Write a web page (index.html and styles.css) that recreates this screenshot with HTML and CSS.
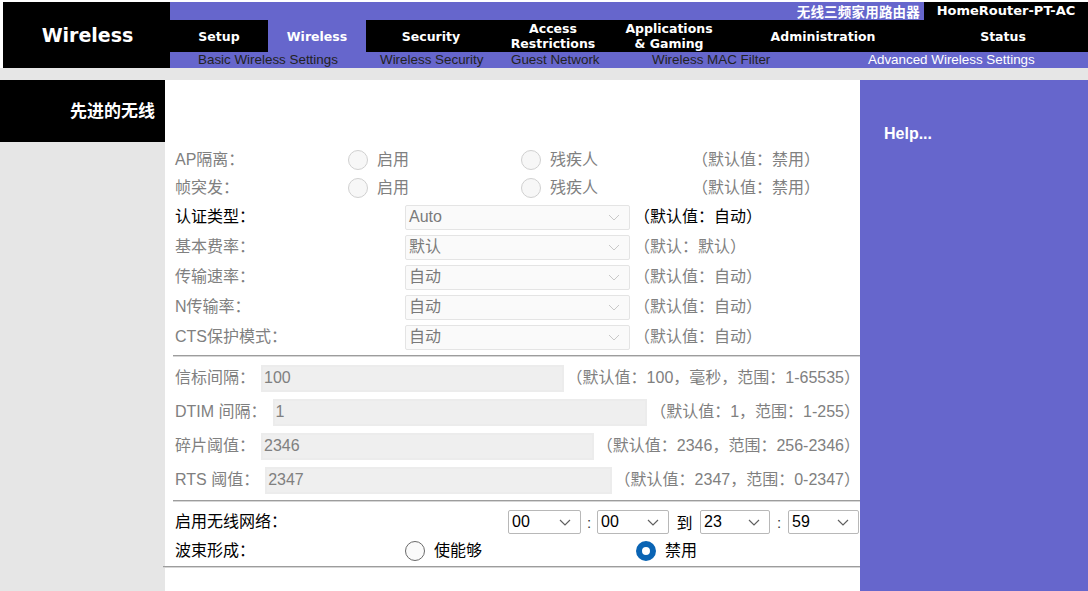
FILE: index.html
```html
<!DOCTYPE html>
<html lang="zh">
<head>
<meta charset="utf-8">
<title>Advanced Wireless Settings</title>
<link rel="stylesheet" href="styles.css">
</head>
<body>
<header class="header">
  <div class="logo">Wireless</div>
  <div class="hright">
    <div class="toprow">
      <span class="product">无线三频家用路由器</span>
      <span class="model">HomeRouter-PT-AC</span>
    </div>
    <nav class="tabs">
      <span class="tab w-setup">Setup</span>
      <span class="tab w-wireless active">Wireless</span>
      <span class="tab w-security">Security</span>
      <span class="tab w-access">Access<br>Restrictions</span>
      <span class="tab w-apps">Applications<br>&amp; Gaming</span>
      <span class="tab w-admin">Administration</span>
      <span class="tab w-status">Status</span>
    </nav>
    <div class="subnav">
      <span class="sub s1">Basic Wireless Settings</span>
      <span class="sub s2">Wireless Security</span>
      <span class="sub s3">Guest Network</span>
      <span class="sub s4">Wireless MAC Filter</span>
      <span class="sub s5 current">Advanced Wireless Settings</span>
    </div>
  </div>
</header>

<main class="main">
  <aside class="side">
    <div class="side-title">先进的无线</div>
  </aside>

  <section class="content">
    <div class="block radios">
      <div class="row r28">
        <span class="lbl lw-radio">AP隔离：</span>
        <span class="opt o1"><span class="radio dis"></span>启用</span>
        <span class="opt o2"><span class="radio dis"></span>残疾人</span>
        <span class="note">（默认值：禁用）</span>
      </div>
      <div class="row r28">
        <span class="lbl lw-radio">帧突发：</span>
        <span class="opt o1"><span class="radio dis"></span>启用</span>
        <span class="opt o2"><span class="radio dis"></span>残疾人</span>
        <span class="note">（默认值：禁用）</span>
      </div>
    </div>

    <div class="block selects">
      <div class="row r30">
        <span class="lbl lw-sel dark">认证类型：</span>
        <span class="sel dis"><span class="val">Auto</span><svg class="chev" width="12" height="7" viewBox="0 0 12 7"><path d="M1 1l5 5 5-5" fill="none" stroke="#c8c8c8" stroke-width="1"/></svg></span>
        <span class="note dark">（默认值：自动）</span>
      </div>
      <div class="row r30">
        <span class="lbl lw-sel">基本费率：</span>
        <span class="sel dis"><span class="val">默认</span><svg class="chev" width="12" height="7" viewBox="0 0 12 7"><path d="M1 1l5 5 5-5" fill="none" stroke="#c8c8c8" stroke-width="1"/></svg></span>
        <span class="note">（默认：默认）</span>
      </div>
      <div class="row r30">
        <span class="lbl lw-sel">传输速率：</span>
        <span class="sel dis"><span class="val">自动</span><svg class="chev" width="12" height="7" viewBox="0 0 12 7"><path d="M1 1l5 5 5-5" fill="none" stroke="#c8c8c8" stroke-width="1"/></svg></span>
        <span class="note">（默认值：自动）</span>
      </div>
      <div class="row r30">
        <span class="lbl lw-sel">N传输率：</span>
        <span class="sel dis"><span class="val">自动</span><svg class="chev" width="12" height="7" viewBox="0 0 12 7"><path d="M1 1l5 5 5-5" fill="none" stroke="#c8c8c8" stroke-width="1"/></svg></span>
        <span class="note">（默认值：自动）</span>
      </div>
      <div class="row r30">
        <span class="lbl lw-sel">CTS保护模式：</span>
        <span class="sel dis"><span class="val">自动</span><svg class="chev" width="12" height="7" viewBox="0 0 12 7"><path d="M1 1l5 5 5-5" fill="none" stroke="#c8c8c8" stroke-width="1"/></svg></span>
        <span class="note">（默认值：自动）</span>
      </div>
    </div>

    <hr class="rule">

    <div class="block inputs">
      <div class="row r34">
        <span class="lbl">信标间隔：</span>
        <input class="txt" type="text" value="100" disabled>
        <span class="note">（默认值：100，毫秒，范围：1-65535）</span>
      </div>
      <div class="row r34">
        <span class="lbl">DTIM 间隔：</span>
        <input class="txt" type="text" value="1" disabled>
        <span class="note">（默认值：1，范围：1-255）</span>
      </div>
      <div class="row r34">
        <span class="lbl">碎片阈值：</span>
        <input class="txt" type="text" value="2346" disabled>
        <span class="note">（默认值：2346，范围：256-2346）</span>
      </div>
      <div class="row r34">
        <span class="lbl">RTS 阈值：</span>
        <input class="txt" type="text" value="2347" disabled>
        <span class="note">（默认值：2347，范围：0-2347）</span>
      </div>
    </div>

    <hr class="rule">

    <div class="block bottom">
      <div class="row r32">
        <span class="lbl dark grow">启用无线网络：</span>
        <span class="tsel t1"><span class="val">00</span><svg class="chev" width="12" height="7" viewBox="0 0 12 7"><path d="M1 1l5 5 5-5" fill="none" stroke="#606060" stroke-width="1.2"/></svg></span>
        <span class="sep">:</span>
        <span class="tsel t2"><span class="val">00</span><svg class="chev" width="12" height="7" viewBox="0 0 12 7"><path d="M1 1l5 5 5-5" fill="none" stroke="#606060" stroke-width="1.2"/></svg></span>
        <span class="sep to">到</span>
        <span class="tsel t3"><span class="val">23</span><svg class="chev" width="12" height="7" viewBox="0 0 12 7"><path d="M1 1l5 5 5-5" fill="none" stroke="#606060" stroke-width="1.2"/></svg></span>
        <span class="sep s-last">:</span>
        <span class="tsel t4"><span class="val">59</span><svg class="chev" width="12" height="7" viewBox="0 0 12 7"><path d="M1 1l5 5 5-5" fill="none" stroke="#606060" stroke-width="1.2"/></svg></span>
      </div>
      <div class="row r26">
        <span class="lbl dark lw-beam">波束形成：</span>
        <span class="opt dark b1"><span class="radio on"></span>使能够</span>
        <span class="opt dark"><span class="radio checked"></span>禁用</span>
      </div>
    </div>

    <hr class="rule wide">
  </section>

  <aside class="help">
    <div class="help-title">Help...</div>
  </aside>
</main>
</body>
</html>
```

FILE: styles.css
```css
* { box-sizing: border-box; }

html, body {
  margin: 0;
  padding: 0;
}

body {
  width: 1088px;
  background: #e6e6e6;
  font-family: "Liberation Sans", "Noto Sans CJK SC", sans-serif;
  overflow: hidden;
}

/* ---------- header ---------- */
.header {
  display: flex;
  height: 68px;
  padding: 2px 0 0 3px;
  background: #ffffff;
}

.logo {
  width: 167px;
  background: #000;
  color: #fff;
  font-family: "DejaVu Sans", Verdana, sans-serif;
  font-weight: bold;
  font-size: 19px;
  display: flex;
  align-items: center;
  justify-content: center;
  padding-left: 2px;
}

.hright {
  flex: 1;
  display: flex;
  flex-direction: column;
  background: #6666cc;
}

.toprow {
  height: 18px;
  display: flex;
  justify-content: flex-end;
  align-items: center;
  color: #fff;
  font-weight: bold;
}

.product {
  font-family: "Noto Sans CJK SC", sans-serif;
  font-size: 13.5px;
  line-height: 18px;
  margin-right: 4px;
  letter-spacing: 0.2px;
}

.model {
  width: 164px;
  height: 18px;
  background: #000;
  font-family: "DejaVu Sans", Verdana, sans-serif;
  font-size: 13px;
  line-height: 18px;
  text-align: center;
}

.tabs {
  height: 32px;
  display: flex;
  background: #000;
}

.tab {
  color: #fff;
  font-family: "DejaVu Sans", Verdana, sans-serif;
  font-weight: bold;
  font-size: 12.5px;
  line-height: 15px;
  display: flex;
  align-items: center;
  justify-content: center;
  text-align: center;
}

.tab.active { background: #6666cc; }

.w-setup { width: 98px; }
.w-wireless { width: 98px; }
.w-security { width: 130px; }
.w-access { width: 114px; }
.w-apps { width: 118px; }
.w-admin { width: 190px; }
.w-status { width: 170px; }

.subnav {
  height: 16px;
  display: flex;
  align-items: center;
  padding-left: 28px;
  font-size: 13.4px;
  line-height: 16px;
  color: #222;
}

.s1 { width: 182px; }
.s2 { width: 131px; }
.s3 { width: 141px; }
.s4 { width: 216px; }
.sub.current { color: #fff; }

/* ---------- main ---------- */
.main {
  display: flex;
  padding-top: 12px;
  min-height: 523px;
}

.side {
  width: 165px;
  background: #e6e6e6;
}

.side-title {
  height: 62px;
  background: #000;
  color: #fff;
  font-family: "Noto Sans CJK SC", sans-serif;
  font-weight: bold;
  font-size: 17px;
  display: flex;
  align-items: center;
  justify-content: flex-end;
  padding-right: 10px;
  padding-bottom: 4px;
}

.content {
  width: 695px;
  background: #fff;
  padding: 66px 0 20px 0;
  color: #808080;
  font-size: 16px;
}

.help {
  flex: 1;
  background: #6666cc;
}

.help-title {
  color: #fff;
  font-weight: bold;
  font-size: 16px;
  padding: 45px 0 0 24px;
}

/* ---------- form rows ---------- */
.block { padding: 0 8px 0 10px; }
.block.inputs { padding-right: 0; }

.row {
  display: flex;
  align-items: center;
  white-space: nowrap;
}

.r26 { height: 26px; }
.r28 { height: 28px; }
.r30 { height: 30px; }
.r32 { height: 32px; }
.r34 { height: 34px; }

.dark { color: #000; }

.lbl { line-height: 20px; }
.lw-radio { width: 173px; }
.lw-sel { width: 230px; }
.lw-beam { width: 230px; }
.grow { flex: 1; }

.opt {
  display: flex;
  align-items: center;
  line-height: 20px;
}
.o1 { width: 173px; }
.o2 { width: 171px; }
.b1 { width: 231px; }

.radio {
  width: 20px;
  height: 20px;
  border-radius: 50%;
  margin-right: 9px;
  flex: none;
}
.radio.dis {
  border: 1px solid #d0d0d0;
  background: #f7f7f7;
}
.radio.on {
  border: 1px solid #6a6a6a;
  background: #fafafa;
}
.radio.checked {
  background: #fff;
  border: 6px solid #0a64b4;
}

.sel {
  width: 225px;
  height: 25px;
  display: flex;
  align-items: center;
  justify-content: space-between;
  padding: 0 9px 0 3px;
  border: 1px solid #e4e4e4;
  border-radius: 2px;
  background: #fafafa;
  margin-right: 4px;
  line-height: 20px;
}
.sel .val { color: #7a7a7a; }

.note { line-height: 20px; }

.txt {
  flex: 1;
  height: 27px;
  margin: 0 3px 0 6px;
  padding: 0 1px;
  border: 2px solid #ececec;
  background: #efefef;
  color: #808080;
  font-family: "Liberation Sans", "Noto Sans CJK SC", sans-serif;
  font-size: 16px;
  min-width: 0;
}

.rule {
  height: 0;
  margin: 3px 0 4px 8px;
  border: 0;
  border-top: 1px solid #9d9d9d;
  border-bottom: 1px solid #d6d6d6;
}
.rule.wide { margin: 2px 0 0 -2px; }

.tsel {
  height: 24px;
  display: flex;
  align-items: center;
  justify-content: space-between;
  padding: 0 9px 0 3px;
  border: 1px solid #b8b8b8;
  border-radius: 2px;
  background: #fff;
  color: #000;
  font-size: 16px;
}
.t1 { width: 73px; }
.t2 { width: 72px; }
.t3 { width: 70px; }
.t4 { width: 71px; }

.sep {
  color: #333;
  width: 16px;
  text-align: center;
  font-size: 15px;
}
.sep.s-last { width: 18px; }
.sep.to {
  width: 31px;
  color: #000;
  font-size: 16px;
}
.bottom { padding-right: 1px; }
```
